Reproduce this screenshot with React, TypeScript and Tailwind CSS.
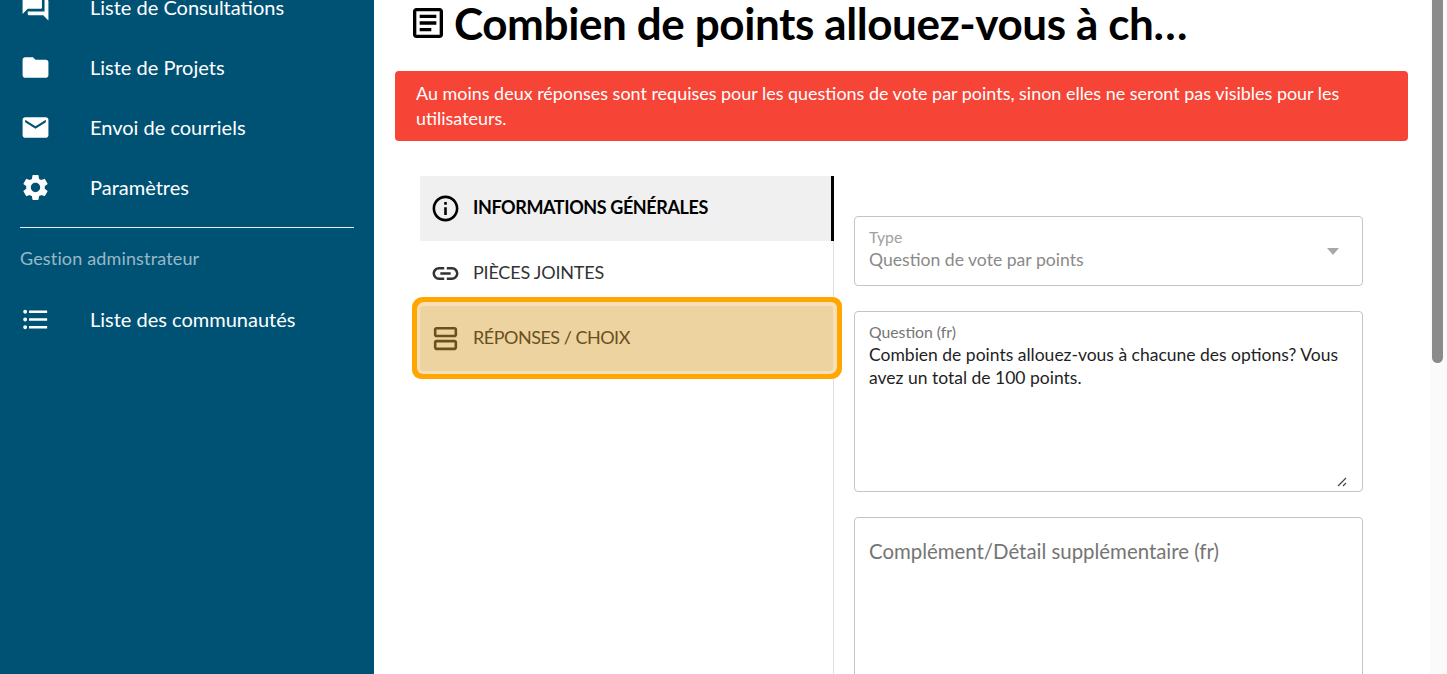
import React from 'react';

const Mi = ({ d, className }: { d: string; className?: string }) => (
  <svg viewBox="0 0 24 24" fill="currentColor" className={className}>
    <path d={d} />
  </svg>
);

const FORUM = "M21 6h-2v9H6v2c0 .55.45 1 1 1h11l4 4V7c0-.55-.45-1-1-1zm-4 6V3c0-.55-.45-1-1-1H3c-.55 0-1 .45-1 1v14l4-4h10c.55 0 1-.45 1-1z";
const FOLDER = "M10 4H4c-1.1 0-1.99.9-1.99 2L2 18c0 1.1.9 2 2 2h16c1.1 0 2-.9 2-2V8c0-1.1-.9-2-2-2h-8l-2-2z";
const MAIL = "M20 4H4c-1.1 0-1.99.9-1.99 2L2 18c0 1.1.9 2 2 2h16c1.1 0 2-.9 2-2V6c0-1.1-.9-2-2-2zm0 4l-8 5-8-5V6l8 5 8-5v2z";
const GEAR = "M19.14 12.94c.04-.3.06-.61.06-.94 0-.32-.02-.64-.07-.94l2.03-1.58c.18-.14.23-.41.12-.61l-1.92-3.32c-.12-.22-.37-.29-.59-.22l-2.39.96c-.5-.38-1.03-.7-1.62-.94l-.36-2.54c-.04-.24-.24-.41-.48-.41h-3.84c-.24 0-.43.17-.47.41l-.36 2.54c-.59.24-1.13.57-1.62.94l-2.39-.96c-.22-.08-.47 0-.59.22L2.74 8.87c-.12.21-.08.47.12.61l2.03 1.58c-.05.3-.09.63-.09.94s.02.64.07.94l-2.03 1.58c-.18.14-.23.41-.12.61l1.92 3.32c.12.22.37.29.59.22l2.39-.96c.5.38 1.03.7 1.62.94l.36 2.54c.05.24.24.41.48.41h3.84c.24 0 .44-.17.47-.41l.36-2.54c.59-.24 1.13-.56 1.62-.94l2.39.96c.22.08.47 0 .59-.22l1.92-3.32c.12-.22.07-.47-.12-.61l-2.01-1.58zM12 15.6c-1.98 0-3.6-1.62-3.6-3.6s1.62-3.6 3.6-3.6 3.6 1.62 3.6 3.6-1.62 3.6-3.6 3.6z";
const LIST = "M4 10.5c-.83 0-1.5.67-1.5 1.5s.67 1.5 1.5 1.5 1.5-.67 1.5-1.5-.67-1.5-1.5-1.5zm0-6c-.83 0-1.5.67-1.5 1.5S3.17 7.5 4 7.5 5.5 6.83 5.5 6 4.83 4.5 4 4.5zm0 12c-.83 0-1.5.68-1.5 1.5s.68 1.5 1.5 1.5 1.5-.68 1.5-1.5-.67-1.5-1.5-1.5zM7 19h14v-2H7v2zm0-6h14v-2H7v2zm0-8v2h14V5H7z";
const ARTICLE = "M19 5v14H5V5h14m0-2H5c-1.1 0-2 .9-2 2v14c0 1.1.9 2 2 2h14c1.1 0 2-.9 2-2V5c0-1.1-.9-2-2-2zM14 17H7v-2h7v2zm3-4H7v-2h10v2zm0-4H7V7h10v2z";
const INFO = "M11 7h2v2h-2zm0 4h2v6h-2zm1-9C6.48 2 2 6.48 2 12s4.48 10 10 10 10-4.48 10-10S17.52 2 12 2zm0 18c-4.41 0-8-3.59-8-8s3.59-8 8-8 8 3.59 8 8-3.59 8-8 8z";
const LINK = "M3.9 12c0-1.71 1.39-3.1 3.1-3.1h4V7H7c-2.76 0-5 2.24-5 5s2.24 5 5 5h4v-1.9H7c-1.71 0-3.1-1.39-3.1-3.1zM8 13h8v-2H8v2zm9-6h-4v1.9h4c1.71 0 3.1 1.39 3.1 3.1s-1.39 3.1-3.1 3.1h-4V17h4c2.76 0 5-2.24 5-5s-2.24-5-5-5z";
const AGENDA = "M19 13H5c-1.1 0-2 .9-2 2v4c0 1.1.9 2 2 2h14c1.1 0 2-.9 2-2v-4c0-1.1-.9-2-2-2zm0 6H5v-4h14v4zm0-16H5c-1.1 0-2 .9-2 2v4c0 1.1.9 2 2 2h14c1.1 0 2-.9 2-2V5c0-1.1-.9-2-2-2zm0 6H5V5h14v4z";

const NavItem = ({ icon, label }: { icon: string; label: string }) => (
  <div className="flex items-center h-[60px] pl-[20px]">
    <Mi d={icon} className="w-[31px] h-[31px] text-white shrink-0" />
    <span className="ml-[39px] text-[20px] text-white">{label}</span>
  </div>
);

const TabItem = ({ icon, label, className, labelClass }: { icon: string; label: string; className: string; labelClass: string }) => (
  <div className={`flex items-center h-[65px] pl-[10px] text-[18px] ${className}`}>
    <Mi d={icon} className="w-[31px] h-[31px] shrink-0" />
    <span className={`ml-[12px] -mt-[2px] ${labelClass}`}>{label}</span>
  </div>
);

export default function App() {
  return (
    <div className="flex h-[674px] w-[1447px] overflow-hidden bg-white font-['Lato','Open_Sans',sans-serif]">
      {/* Sidebar */}
      <aside className="w-[374px] shrink-0 bg-[#005275] -mt-[23px]">
        <NavItem icon={FORUM} label="Liste de Consultations" />
        <NavItem icon={FOLDER} label="Liste de Projets" />
        <NavItem icon={MAIL} label="Envoi de courriels" />
        <NavItem icon={GEAR} label="Paramètres" />
        <div className="mx-[20px] mt-[10px] border-t border-white/90" />
        <div className="pl-[20px] mt-[18px] text-[18px] leading-[24px] tracking-[0.15px] text-white/60">Gestion adminstrateur</div>
        <div className="mt-[19px]">
          <NavItem icon={LIST} label="Liste des communautés" />
        </div>
      </aside>

      {/* Main */}
      <main className="flex-1 min-w-0 pl-[21px] pr-[22px]">
        <div className="flex items-center h-[46px] mb-[25px] pl-[13px]">
          <Mi d={ARTICLE} className="w-[40px] h-[40px] text-black shrink-0" />
          <h1 className="ml-[6px] text-[44px] font-bold leading-[46px] text-black tracking-[-0.4px]">Combien de points allouez-vous à ch…</h1>
        </div>
        <div className="rounded-[4px] bg-[#f64437] px-[21px] py-[10px] text-[17.96px] leading-[25px] text-white">
          Au moins deux réponses sont requises pour les questions de vote par points, sinon elles ne seront pas visibles pour les utilisateurs.
        </div>

        <div className="flex mt-[35px] pl-[25px] pr-[45px]">
          {/* Tabs */}
          <div className="relative w-[414px] shrink-0 border-r border-[#e0e0e0] min-h-[600px]">
            <TabItem icon={INFO} label="INFORMATIONS GÉNÉRALES" labelClass="tracking-[-0.4px]" className="bg-[#f0f0f0] font-bold text-black" />
            <div className="absolute top-0 right-[-1px] w-[3px] h-[65px] bg-black" />
            <TabItem icon={LINK} label="PIÈCES JOINTES" labelClass="tracking-[-0.2px]" className="text-[#333]" />
            <TabItem icon={AGENDA} label="RÉPONSES / CHOIX" labelClass="tracking-[-0.5px]" className="relative text-[#69501f] bg-[#edd3a0] rounded-[3px] shadow-[0_0_0_3px_#f7e0b5,1px_-1px_0_3px_#f7e0b5,0_0_0_8px_#ffa600,1px_-1px_0_8px_#ffa600]" />
          </div>

          {/* Form */}
          <div className="flex-1 min-w-0 pl-[20px] pt-[40px]">
            <div className="relative h-[70px] rounded-[4px] border border-[#c4c4c4] px-[14px] pt-[10px]">
              <div className="mb-[1px] text-[15.75px] leading-[20px] text-[#a0a0a0]">Type</div>
              <div className="text-[17.6px] leading-[24px] text-[#8a8a8a]">Question de vote par points</div>
              <div className="absolute right-[23px] top-[31px] w-0 h-0 border-x-[6px] border-x-transparent border-t-[7px] border-t-[#a8a8a8]" />
            </div>
            <div className="relative mt-[25px] h-[181px] rounded-[4px] border border-[#c4c4c4] px-[14px] pt-[10px]">
              <div className="mb-[1px] text-[15.75px] leading-[20px] text-[#757575]">Question (fr)</div>
              <div className="text-[17.5px] leading-[23px] text-[#1f1f1f]">Combien de points allouez-vous à chacune des options? Vous avez un total de 100 points.</div>
              <svg viewBox="0 0 10 10" className="absolute right-[15px] bottom-[4px] w-[10px] h-[10px] text-[#444]">
                <path d="M1 9 9 1M6 9 9 6" stroke="currentColor" strokeWidth="1.2" fill="none" />
              </svg>
            </div>
            <div className="mt-[25px] h-[200px] rounded-[4px] border border-[#c4c4c4] px-[14px] pt-[20px] text-[20.4px] leading-[26px] text-[#757575]">
              Complément/Détail supplémentaire (fr)
            </div>
          </div>
        </div>
      </main>

      {/* Scrollbar */}
      <div className="w-[17px] shrink-0 bg-[#fafafa] pl-[2px]">
        <div className="w-[11px] h-[363px] rounded-b-[6px] bg-[#8a8a8a]" />
      </div>
    </div>
  );
}
